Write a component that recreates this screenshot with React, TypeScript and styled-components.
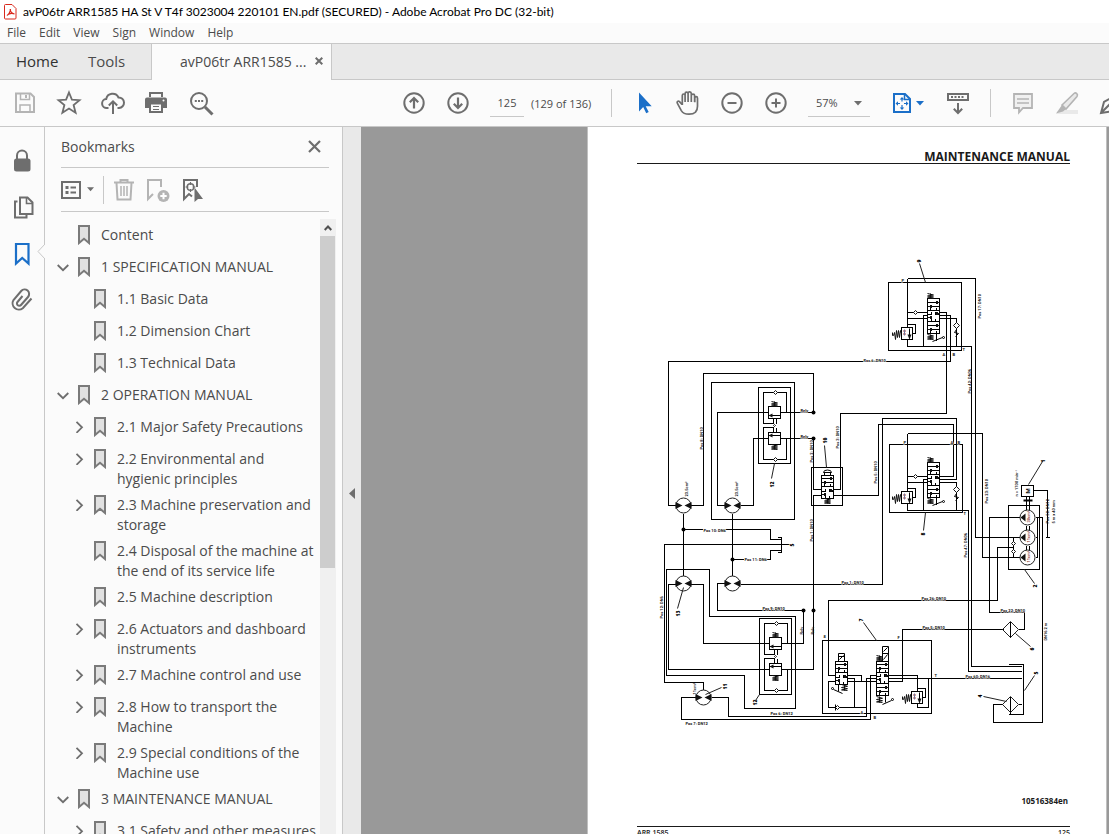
import React from "react";
import styled, { createGlobalStyle } from "styled-components";

const GlobalStyle = createGlobalStyle`
  * { box-sizing: border-box; }
  body { margin: 0; background: #fbfbfb; }
  body, button, input, select { font-family: "Open Sans", "Noto Sans", sans-serif; }
`;

const Window = styled.div`
  height: 100vh;
  display: flex;
  flex-direction: column;
  overflow: hidden;
  color: #4b4b4b;
  background: #fbfbfb;
`;

const PlainButton = styled.button`
  border: 0;
  padding: 0;
  margin: 0;
  background: transparent;
  color: inherit;
  display: flex;
  align-items: center;
  justify-content: center;
`;

/* ---------- window chrome ---------- */

const TitleBar = styled.header`
  flex: 0 0 23px;
  display: flex;
  align-items: center;
  gap: 6px;
  padding-left: 4px;
  background: #fff;
  color: #000;
`;

const Title = styled.h1`
  margin: 0;
  font-size: 12px;
  font-weight: 400;
  line-height: 22px;
  font-family: Lato, "Open Sans", sans-serif;
  white-space: nowrap;
`;

const MenuBar = styled.nav`
  flex: 0 0 20px;
  display: flex;
  gap: 13px;
  padding-left: 7px;
`;

const MenuItem = styled(PlainButton)`
  font-size: 12px;
  line-height: 20px;
`;

const TabBar = styled.nav`
  flex: 0 0 37px;
  display: flex;
  background: #e9e9e9;
  border-top: 1px solid #c8c8c8;
`;

const NavTab = styled(PlainButton)<{ $strong?: boolean }>`
  width: ${(p) => (p.$strong ? 72 : 79)}px;
  padding: 0 0 2px 16px;
  justify-content: flex-start;
  font-size: 15px;
  color: ${(p) => (p.$strong ? "#323232" : "#4b4b4b")};
  border-bottom: 1px solid #c8c8c8;
`;

const DocTab = styled.div`
  width: 181px;
  display: flex;
  align-items: center;
  justify-content: space-between;
  padding: 0 8px 2px 28px;
  background: #fbfbfb;
  border: solid #c8c8c8;
  border-width: 0 1px;
  font-size: 14px;
`;

const TabRest = styled.div`
  flex: 1;
  border-bottom: 1px solid #c8c8c8;
`;

/* ---------- toolbar ---------- */

const Toolbar = styled.div`
  flex: 0 0 47px;
  display: flex;
  align-items: center;
  padding-left: 3px;
  border-bottom: 1px solid #c8c8c8;
  overflow: hidden;
  font-size: 11px;
`;

const ToolGroup = styled.div<{ $gap?: number }>`
  display: flex;
  align-items: center;
  flex: none;
  margin-left: ${(p) => p.$gap ?? 0}px;
`;

const ToolButton = styled(PlainButton)<{ $tone?: string }>`
  width: 44px;
  height: 40px;
  flex: none;
  color: ${(p) => p.$tone ?? "#6e6e6e"};
`;

const FitButton = styled(ToolButton)`
  width: 56px;
  gap: 4px;
`;

const Separator = styled.span`
  width: 1px;
  height: 28px;
  flex: none;
  background: #c8c8c8;
`;

const PageInput = styled.input`
  width: 34px;
  height: 28px;
  margin-left: 10px;
  padding: 0;
  border: 0;
  border-bottom: 1px solid #c8c8c8;
  background: transparent;
  text-align: center;
  font-size: 11px;
  color: #4b4b4b;
`;

const PageCount = styled.span`
  width: 80px;
  margin-left: 7px;
  white-space: nowrap;
`;

const ZoomBox = styled.div`
  position: relative;
  width: 62px;
  height: 28px;
  border-bottom: 1px solid #c8c8c8;
  color: #6e6e6e;
  svg { position: absolute; right: 8px; top: 12px; pointer-events: none; }
`;

const ZoomSelect = styled.select`
  appearance: none;
  width: 100%;
  height: 27px;
  padding: 0 0 0 8px;
  border: 0;
  background: transparent;
  font-size: 11px;
  color: #4b4b4b;
`;

/* ---------- left side ---------- */

const Body = styled.div`
  flex: 1;
  min-height: 0;
  display: flex;
`;

const Rail = styled.nav`
  flex: 0 0 45px;
  border-right: 1px solid #c8c8c8;
  display: flex;
  flex-direction: column;
  padding-top: 11px;
`;

const RailButton = styled(PlainButton)<{ $active?: boolean }>`
  position: relative;
  height: 46px;
  width: 44px;
  color: ${(p) => (p.$active ? "#1b6fc8" : "#6e6e6e")};
`;

const Notch = styled.svg`
  position: absolute;
  right: -1px;
  top: 14px;
`;

const Panel = styled.aside`
  flex: 0 0 298px;
  display: flex;
  flex-direction: column;
  padding: 0 6px 0 16px;
  border-right: 1px solid #c8c8c8;
`;

const PanelHead = styled.div`
  flex: 0 0 41px;
  margin-right: 7px;
  padding: 0 8px 2px 0;
  display: flex;
  align-items: center;
  justify-content: space-between;
  border-bottom: 1px solid #c8c8c8;
`;

const PanelTitle = styled.h2`
  margin: 0;
  font-size: 14px;
  font-weight: 400;
`;

const PanelTools = styled.div`
  flex: 0 0 44px;
  margin-right: 7px;
  display: flex;
  align-items: center;
  border-bottom: 1px solid #c8c8c8;
`;

const OptionsButton = styled(PlainButton)`
  width: 42px;
  gap: 6px;
  justify-content: flex-start;
  color: #6e6e6e;
`;

const PanelButton = styled(PlainButton)<{ $tone: string }>`
  width: 34px;
  height: 28px;
  color: ${(p) => p.$tone};
`;

const PanelButtons = styled.div`
  display: flex;
  padding-left: 3px;
`;

const ListArea = styled.div`
  flex: 1;
  min-height: 0;
  display: flex;
`;

const Tree = styled.ul`
  flex: 1;
  min-width: 0;
  margin: 0 0 0 -8px;
  padding: 7px 0 0;
  list-style: none;
  overflow: hidden;
`;

const Row = styled.li<{ $level: number }>`
  display: grid;
  grid-template-columns: 20px 16px minmax(0, 1fr);
  min-height: 32px;
  padding: 6px 0 0 ${(p) => p.$level * 16}px;
`;

const Toggle = styled(PlainButton)`
  height: 20px;
  color: #6e6e6e;
`;

const BookmarkIcon = styled.svg`
  margin-left: 4px;
`;

const RowLink = styled.a`
  padding-left: 12px;
  font-size: 14px;
  line-height: 20px;
  color: #4b4b4b;
  text-decoration: none;
  white-space: pre-line;
`;

const Scrollbar = styled.div`
  flex: 0 0 16px;
  margin-top: 7px;
  background: #f0f0f0;
`;

const ScrollUp = styled(PlainButton)`
  width: 16px;
  height: 17px;
  color: #505050;
`;

const Thumb = styled.div`
  width: 15px;
  height: 54%;
  background: #cdcdcd;
`;

const Splitter = styled(PlainButton)`
  flex: 0 0 18px;
  padding-top: 26px;
  background: #e9e9e9;
  color: #6e6e6e;
`;

/* ---------- document ---------- */

const Viewer = styled.main`
  flex: 1;
  min-width: 0;
  display: grid;
  grid-template-columns: minmax(0, 226fr) minmax(0, 520fr) 2px;
  background: #999;
  overflow: hidden;
`;

const Page = styled.article`
  grid-column: 2;
  background: #fff;
  border: solid #c0c0c0;
  border-width: 0 1px;
  padding: 0 36px 0 49px;
  color: #1a1a1a;
`;

const PageHeading = styled.h2`
  margin: 0;
  height: 37px;
  padding-top: 22px;
  font-size: 12px;
  line-height: 16px;
  font-weight: 700;
  text-align: right;
  white-space: nowrap;
  border-bottom: 1px solid #1a1a1a;
`;

const Diagram = styled.svg`
  display: block;
  width: 100%;
  height: auto;
  margin-top: 86px;
`;

const DrawingCode = styled.p`
  margin: 64px 2px 0 0;
  font-size: 8px;
  line-height: 14px;
  font-weight: 700;
  text-align: right;
`;

const PageFoot = styled.footer`
  margin-top: 18px;
  border-top: 1px solid #1a1a1a;
  display: flex;
  justify-content: space-between;
  font-size: 7px;
  line-height: 12px;
  font-weight: 600;
`;

const Caret = ({ w = 8 }: { w?: number }) => (
  <svg width={w} height="5" viewBox="0 0 8 5"><path d="M0 0h8L4 4.600z" fill="currentColor" /></svg>
);

const Icon = ({ size = 28, children }: { size?: number; children: React.ReactNode }) => (
  <svg width={size} height={size} viewBox="0 0 28 28" fill="none" stroke="currentColor" strokeWidth="2">
    {children}
  </svg>
);

type Item = { label: string; level: number; state?: "open" | "closed" };
const items: Item[] = [
  { label: "Content", level: 0 },
  { label: "1 SPECIFICATION MANUAL", level: 0, state: "open" },
  { label: "1.1 Basic Data", level: 1 },
  { label: "1.2 Dimension Chart", level: 1 },
  { label: "1.3 Technical Data", level: 1 },
  { label: "2 OPERATION MANUAL", level: 0, state: "open" },
  { label: "2.1 Major Safety Precautions", level: 1, state: "closed" },
  { label: "2.2 Environmental and\nhygienic principles", level: 1, state: "closed" },
  { label: "2.3 Machine preservation and\nstorage", level: 1, state: "closed" },
  { label: "2.4 Disposal of the machine at\nthe end of its service life", level: 1 },
  { label: "2.5 Machine description", level: 1 },
  { label: "2.6 Actuators and dashboard\ninstruments", level: 1, state: "closed" },
  { label: "2.7 Machine control and use", level: 1, state: "closed" },
  { label: "2.8 How to transport the\nMachine", level: 1, state: "closed" },
  { label: "2.9 Special conditions of the\nMachine use", level: 1, state: "closed" },
  { label: "3 MAINTENANCE MANUAL", level: 0, state: "open" },
  { label: "3.1 Safety and other measures", level: 1, state: "closed" },
];

/* ---------- hydraulic scheme symbols ---------- */

const pipes = [
  "M675 505H668V361H950V315H939",
  "M690 505H703V373H813V412H780M768 412H717V505H725",
  "M740 505H753V438H768M780 438H813V489H821",
  "M711 382H794V519H711z",
  "M683 513V576M732 513V576",
  "M683 529H702M722 529H770V539H780M777 537H781V552H777M781 544H788",
  "M732 559H743M764 559H770V550H780",
  "M780 544H664V682H703V690",
  "M666 569H709V616H795V708H744V675H666z",
  "M675 584H668V669H769M690 584H703V643H769",
  "M725 583H717V610H803V643H781M740 584H882V418H956V479H939",
  "M821 495H813V669H781",
  "M695 697H681V719H870V675H876M711 697H728V716H866V678H876",
  "M832 489H840V413H946V312H939M832 495H878V424H953V476H939",
  "M811 467H842V505H811z",
  "M907 278H975V537H1020M907 433H982V557H1020",
  "M961 346H971V666H1021M961 510H968V671H1021",
  "M1033 490H1047V537M1045 537H1049",
  "M1008 505H1039V569H1008z",
  "M1026 496V510M1029 496V510M1026 525V530M1029 525V530M1026 545V550M1029 545V550",
  "M1020 517H989V612H1024V629H1018M1003 629H902V681H888",
  "M1035 557H1037V517M1035 537H1037M1035 517H1042V722H993V704H1002",
  "M1013 537V557M1013 547H997V600H828V675H835",
  "M822 640H931V713H822z",
  "M1008 664H1023V714H1008M1018 704H1021",
  "M888 678H1021M1010 621V637M1010 696V714",
  "M847 675H861V681M847 681H876M847 678H854V707M835 681H828V707H866",
  "M888 675H917V691M917 703V707H928V678M917 688H925V697H922",
];

const Motor = ({ x, y }: { x: number; y: number }) => (
  <g>
    <circle cx={x} cy={y} r="7.500" fill="#fff" stroke="#222" />
    <path d={`M${x - 8} ${y - 3.500}v7l7-3.500zM${x + 8} ${y - 3.500}v7l-7-3.500z`} fill="#111" stroke="none" />
  </g>
);

const Pump = ({ y, cap }: { y: number; cap: string }) => (
  <g>
    <circle cx="1027" cy={y} r="7.500" fill="#fff" stroke="#222" />
    <path d={`M1025 ${y - 4}v8l-5-4z`} fill="#111" stroke="none" />
    <text transform={`translate(1029 ${y + 5}) rotate(-90)`}>{cap}</text>
  </g>
);

const Diamond = ({ x, y, r = 3 }: { x: number; y: number; r?: number }) => (
  <path d={`M${x} ${y - r}l${r} ${r}l${-r} ${r}l${-r} ${-r}z`} fill="#fff" stroke="#111" />
);

const Spring = ({ x, y, h = 5 }: { x: number; y: number; h?: number }) => (
  <path d={`M${x - 3} ${y}l6 ${h * 0.3}l-6 ${h * 0.2}l6 ${h * 0.2}l-6 ${h * 0.2}l6 ${h * 0.1}M${x} ${y}v${h}`} stroke="#111" />
);

/* pair of counterbalance valves in a frame */
const ValvePair = ({ x, y, w, h, top }: { x: number; y: number; w: number; h: number; top: number }) => {
  const sx = x + 10;
  return (
    <g>
      <g shapeRendering="crispEdges">
        <path d={`M${x} ${y}h${w}v${h}h${-w}z`} />
        <path d={`M${sx} ${top + 14}h12v12h-12zM${sx} ${top + 40}h12v12h-12z`} fill="#fff" />
        <path d={`M${sx + 18} ${top + 20}V${top}H${sx - 5}V${top + 31}H${sx + 5}V${top + 26}M${sx + 8} ${top + 26}v5`} />
        <path d={`M${sx + 18} ${top + 46}V${top + 67}H${sx - 5}V${top + 35}H${sx + 5}V${top + 40}M${sx + 8} ${top + 35}v5`} />
        <path d={`M${sx} ${top + 23}h11M${sx} ${top + 43}h11`} />
      </g>
      <path d={`M${sx} ${top + 23}l4-2v4zM${sx} ${top + 43}l4-2v4z`} fill="#111" stroke="none" />
      <Diamond x={sx + 7} y={top} r={2} />
      <Diamond x={sx + 7} y={top + 67} r={2} />
      <Diamond x={sx + 6} y={top + 33} r={1} />
      <Spring x={sx + 6} y={top + 9} />
      <Spring x={sx + 6} y={top + 52} />
    </g>
  );
};

const Relief = ({ x, y }: { x: number; y: number }) => (
  <g>
    <path d={`M${x} ${y}h11v12h-11z`} fill="#fff" shapeRendering="crispEdges" />
    <path d={`M${x + 8} ${y + 1}v10`} />
    <path d={`M${x + 6} ${y + 7}h4l-2 5z`} fill="#111" stroke="none" />
    <path d={`M${x} ${y + 6}l-1-3l-1 7l-1-7l-1 7l-1-7l-1 9l-1-7l-1 3h-1v-3`} stroke="#111" />
    <path d={`M${x + 2} ${y + 3}l2 4M${x + 4} ${y + 3}l-2 4`} stroke="#a44" />
    <path d={`M${x + 3} ${y + 2}v6`} stroke="#779" />
  </g>
);

const Spool = ({ x, y, rows }: { x: number; y: number; rows: number[] }) => (
  <g>
    <path
      d={`M${x} ${y}h12v${rows[rows.length - 1]}h-12z` + rows.slice(0, -1).map((r) => `M${x} ${y + r}h12`).join("")}
      fill="#fff"
      shapeRendering="crispEdges"
    />
    {rows.map((r, i) => (
      <g key={r} shapeRendering="crispEdges">
        <path d={i === 1 ? `M${x} ${y + r - 7}h4v-3M${x + 12} ${y + r - 7}h-4v-3M${x + 4} ${y + r - 3}v3M${x + 8} ${y + r - 3}v3` : `M${x} ${y + r - 8}h12M${x + 3} ${y + r - 3}v3M${x + 9} ${y + r - 3}v3M${x} ${y + r - 4}h12`} />
        <path d={`M${x + 12} ${y + r - 8}l-4-2v4zM${x} ${y + r - 4}l4-2v4z`} fill="#111" stroke="none" />
      </g>
    ))}
  </g>
);

/* steering block: frame, spool, relief and check valves */
const Block = ({ dy, fx }: { dy: number; fx: number }) => (
  <g transform={`translate(0 ${dy})`}>
    <g shapeRendering="crispEdges">
      <path d={`M${fx} ${282 - (dy ? 2 : 0)}h73V${dy ? 348 : 350}h-73z`} />
      <path d={`M907 ${dy ? 269 : 278}V327M907 339V346H961M907 312H927M907 318H927M939 318H956V346M927 315H923V346M907 324H915V333H912M936 333V340`} />
    </g>
    <Spool x={927} y={298} rows={[12, 23, 35]} />
    <Spring x={930} y={293} />
    <Spring x={930} y={334} />
    <Relief x={901} y={327} />
    <Diamond x={915} y={312} r={2} />
    <Diamond x={956} y={325} />
    <path d="M956 329l-2 3l4 1l-3 3M932 341L942 337" />
    <circle cx="943" cy="337" r="1" />
  </g>
);

const hLabels: [number, number, string][] = [
  [863, 361, "Pos 6: DN10"], [800, 411, "Relv"], [800, 437, "Relv"],
  [703, 531, "Pos 10: DN6"], [744, 560, "Pos 11: DN6"], [762, 609, "Pos 9: DN10"],
  [770, 714, "Pos 6: DN12"], [685, 724, "Pos 7: DN12"], [841, 583, "Pos 1: DN10"],
  [921, 599, "Pos 26: DN10"], [922, 628, "Pos 5: DN10"], [1000, 611, "Pos 22: DN10"],
  [965, 677, "Pos 60: DN16"], [823, 637, "8"], [897, 638, "F"], [934, 676, "T"],
  [860, 713, "A"], [873, 718, "B"], [901, 281, "P"], [942, 355, "A"], [952, 355, "B"],
  [903, 443, "P"], [950, 443, "A"], [957, 443, "B"], [962, 350, "T"], [963, 514, "T"],
];

const vLabels: [number, number, string][] = [
  [702, 449, "Pos 8: DN10"], [687, 496, "23.5cm³"], [737, 496, "23.5cm³"],
  [812, 462, "Pos 2: DN10"], [812, 541, "Pos 1: DN10"], [838, 448, "Pos 3: DN10"],
  [662, 618, "Pos 12: DN6"], [802, 634, "Relv"], [813, 634, "Relv"], [695, 694, "11cm³"],
  [980, 318, "Pos 17: DN10"], [970, 393, "Pos 42: DN06"], [876, 483, "Pos 5: DN10"],
  [987, 503, "Pos 23: DN10"], [966, 557, "Pos 47: DN06"], [1017, 496, "n = 1700 min⁻¹"],
  [1048, 523, "Pos 50: DN12"], [1054, 523, "5 m x 40 mm"], [1046, 640, "DN16 2 m"],
];

const leaders: [number, number, number, number, string, number, number][] = [
  [774, 463, 771, 478, "12", 773, 487], [759, 694, 755, 700, "12", 756, 705],
  [683, 587, 677, 608, "13", 679, 616], [705, 694, 721, 687, "11", 726, 689],
  [826, 467, 824, 445, "10", 826, 443], [919, 263, 925, 282, "9", 920, 262],
  [925, 512, 923, 530, "8", 924, 535], [1028, 484, 1042, 461, "1", 1044, 462],
  [1024, 569, 1034, 583, "2", 1036, 587], [1015, 633, 1030, 646, "6", 1033, 650],
  [863, 622, 876, 640, "7", 862, 621], [983, 696, 1006, 701, "4", 981, 697],
  [1024, 690, 1034, 675, "5", 1037, 674], [788, 544, 789, 544, "5", 793, 546],
];

const HydraulicScheme = () => (
  <Diagram viewBox="637 250 433 480" role="img" aria-label="Hydraulic scheme">
    <g transform="translate(.5 .5)" fill="none" stroke="#000" strokeWidth="1">
      <g shapeRendering="crispEdges">{pipes.map((d) => <path key={d} d={d} />)}</g>
      <ValvePair x={758} y={387} w={32} h={76} top={392} />
      <ValvePair x={759} y={618} w={32} h={76} top={623} />
      <Motor x={683} y={505} />
      <Motor x={732} y={505} />
      <Motor x={683} y={583} />
      <Motor x={732} y={583} />
      <Motor x={703} y={697} />
      <Block dy={0} fx={888} />
      <Block dy={164} fx={889} />
      <Spool x={821} y={475} rows={[11, 23]} />
      <path d="M824 475v-3h6v3M823 472a4 2.500 0 0 1 8 0z" />
      <Spring x={827} y={498} />
      <Spool x={835} y={661} rows={[11, 23]} />
      <Spool x={876} y={661} rows={[11, 22, 34]} />
      <path d="M838 653h6v8h-6zM882 646h6v15h-6zM882 653h6M838 656h6M839 659l4-4M883 651l4-4M883 659l4-5" />
      <Spring x={844} y={684} h={6} />
      <Spring x={879} y={655} />
      <Spring x={879} y={696} h={6} />
      <Relief x={911} y={691} />
      <Diamond x={837} y={707} r={2} />
      <path d="M835 704v6M838 684v7M833 689l9 4M885 695v7M882 704l9-4" />
      <circle cx="832" cy="688" r="1" />
      <circle cx="892" cy="699" r="1" />
      <path d="M1021 485h12v11h-12z" fill="#fff" shapeRendering="crispEdges" />
      <path d="M1023 500h9" strokeWidth="2" />
      <path d="M1010 621l8 8l-8 8l-8-8zM1010 696l8 8l-8 8l-8-8z" stroke="#222" />
      <Diamond x={1013} y={543} r={2} />
      <Diamond x={1013} y={551} r={2} />
      {[[813, 412], [813, 438], [683, 529], [732, 559], [803, 610], [813, 610]].map(([x, y]) => (
        <circle key={`${x}-${y}`} cx={x} cy={y} r="2" fill="#000" stroke="none" />
      ))}
      <g fill="#111" stroke="none" fontFamily="Roboto, sans-serif" fontSize="4" fontWeight="700">
        <g fill="#8a3a30"><Pump y={517} cap="30cm³" /><Pump y={537} cap="11cm³" /><Pump y={557} cap="11cm³" /></g>
        {hLabels.map(([x, y, t]) => (
          <text key={`${x}-${y}`} x={x} y={y} stroke="#fff" strokeWidth="1" paintOrder="stroke">{t}</text>
        ))}
        {vLabels.map(([x, y, t]) => (
          <text key={`${x}-${y}`} transform={`translate(${x} ${y}) rotate(-90)`}>{t}</text>
        ))}
        <text transform="translate(1029 493) rotate(-90)" fontSize="6">M</text>
      </g>
      {leaders.map(([x1, y1, x2, y2, t, tx, ty]) => (
        <g key={`${t}-${x1}`}>
          <path d={`M${x1} ${y1}L${x2} ${y2}`} stroke="#222" />
          <text transform={`translate(${tx} ${ty}) rotate(-90)`} fill="#000" stroke="none" fontFamily="Open Sans, sans-serif" fontWeight="800" fontSize="5">{t}</text>
        </g>
      ))}
    </g>
  </Diagram>
);

export default function App() {
  return (
    <Window>
      <GlobalStyle />
      <TitleBar>
        <svg width="13" height="16" viewBox="0 0 13 16" fill="#fff" stroke="#d9281c">
          <path d="M1.500.5H8l4 4v9.500a1 1 0 0 1-1 1H1.500a1 1 0 0 1-1-1V1.500a1 1 0 0 1 1-1z" />
          <path d="M3 11.500c1.500-.5 3.500-4 3.500-6.500M6.200 5c0 2.500 2 4.500 4.300 5M3 11.500c1.500-2 5-2.500 7.500-1.500" strokeWidth="1.200" fill="none" />
        </svg>
        <Title>avP06tr ARR1585 HA St V T4f 3023004 220101 EN.pdf (SECURED) - Adobe Acrobat Pro DC (32-bit)</Title>
      </TitleBar>
      <MenuBar aria-label="Menu">
        {["File", "Edit", "View", "Sign", "Window", "Help"].map((m) => <MenuItem key={m}>{m}</MenuItem>)}
      </MenuBar>
      <TabBar aria-label="Tabs">
        <NavTab $strong>Home</NavTab>
        <NavTab>Tools</NavTab>
        <DocTab>
          <span>avP06tr ARR1585 ...</span>
          <PlainButton aria-label="Close tab">
            <svg width="8" height="8" viewBox="0 0 8 8" stroke="#6e6e6e" strokeWidth="2"><path d="M.7.7l6.600 6.600M7.300.7L.7 7.300" /></svg>
          </PlainButton>
        </DocTab>
        <TabRest />
      </TabBar>
      <Toolbar role="toolbar" aria-label="Main">
        <ToolGroup>
          <ToolButton aria-label="Save" $tone="#b4b4b4">
            <Icon><path d="M5 4.500h14.500l3.500 3.500v15H5z" /><path d="M9.500 4v6.500h9V4M9 23v-7h10v7" strokeWidth="1.500" /><path d="M15 6v3" /></Icon>
          </ToolButton>
          <ToolButton aria-label="Star">
            <Icon><path d="M14 3.500l2.900 7.200 7.600.5-5.900 4.900 2 7.600L14 19.500l-6.600 4.200 2-7.600-5.900-4.900 7.600-.5z" strokeWidth="1.800" /></Icon>
          </ToolButton>
          <ToolButton aria-label="Upload">
            <Icon><path d="M9.500 19H8a4.500 4.500 0 0 1-.8-9A6.500 6.500 0 0 1 19.500 8.500a5.200 5.200 0 0 1 .5 10.500h-1.500M14 25V12.500M9.800 16.500l4.200-4.200 4.200 4.200" /></Icon>
          </ToolButton>
          <ToolButton aria-label="Print">
            <Icon>
              <path d="M6 3h14v5H6z" fill="currentColor" stroke="none" /><path d="M8 5h10v3H8z" fill="#fbfbfb" stroke="none" />
              <path d="M4 8.500h18a2 2 0 0 1 2 2V19H2v-8.500a2 2 0 0 1 2-2z" fill="currentColor" stroke="none" />
              <path d="M7 14.500h12V23H7z" fill="#fbfbfb" /><path d="M10 17.500h6M10 20.500h6" strokeWidth="1.200" />
              <circle cx="20.500" cy="11.500" r="1" fill="#fff" stroke="none" />
            </Icon>
          </ToolButton>
          <ToolButton aria-label="Find">
            <Icon><circle cx="12" cy="12" r="8" /><path d="M18 18l7.500 7.500" strokeWidth="3" /><path d="M7.800 12h2M11 12h2M14.200 12h2" /></Icon>
          </ToolButton>
        </ToolGroup>
        <ToolGroup $gap={169}>
          <ToolButton aria-label="Previous page">
            <Icon><circle cx="14" cy="14" r="9.700" /><path d="M14 19.500V9.500M9.800 13.300L14 9l4.200 4.300" strokeWidth="2.200" /></Icon>
          </ToolButton>
          <ToolButton aria-label="Next page">
            <Icon><circle cx="14" cy="14" r="9.700" /><path d="M14 8.500v10M9.800 14.700L14 19l4.200-4.300" strokeWidth="2.200" /></Icon>
          </ToolButton>
          <PageInput aria-label="Page number" defaultValue="125" />
          <PageCount>(129 of 136)</PageCount>
        </ToolGroup>
        <Separator />
        <ToolGroup $gap={10}>
          <ToolButton aria-label="Select" $tone="#1b6fc8">
            <Icon><path d="M9 3.500V22.500l4.200-4.500 3 6.300 2.500-1.300-3-5.800h6z" fill="currentColor" stroke="none" /></Icon>
          </ToolButton>
          <ToolButton aria-label="Pan">
            <Icon>
              <path d="M8 15.500L5.500 12.700c-1.300-1.300-3 0-2.200 1.400l4 7.500C9 24.500 11 25.200 15 25.200c6 0 8.500-3 8.500-8v-8c0-2-2.700-2-2.700 0v4M8.300 16V6.500c0-2 2.800-2 2.800 0V13M11.100 13V4.700c0-2 3-2 3 0V13M14.100 13V4.200c0-2 3.200-1.500 3.200.5V13M17.300 13V6.500c0-1.800 3.300-1.800 3.300 0V13" strokeWidth="1.700" />
            </Icon>
          </ToolButton>
          <ToolButton aria-label="Zoom out"><Icon><circle cx="14" cy="14" r="9.700" /><path d="M9.500 14h9" /></Icon></ToolButton>
          <ToolButton aria-label="Zoom in"><Icon><circle cx="14" cy="14" r="9.700" /><path d="M9.500 14h9M14 9.500v9" /></Icon></ToolButton>
        </ToolGroup>
        <ToolGroup $gap={10}>
          <ZoomBox>
            <ZoomSelect aria-label="Zoom level" defaultValue="57%"><option>57%</option></ZoomSelect>
            <Caret />
          </ZoomBox>
        </ToolGroup>
        <ToolGroup $gap={10}>
          <FitButton aria-label="Fit page" $tone="#1b6fc8">
            <svg width="20" height="22" viewBox="0 0 20 22" fill="none" stroke="currentColor" strokeWidth="2">
              <path d="M2 2h11l5 5v13H2z" /><path d="M12.500 2v5.500H18" strokeWidth="1.500" />
              <path d="M10 6.500v3M10 13v3M5 11.500h3M12 11.500h3" strokeWidth="1.200" />
              <path d="M10 5l2.300 2.500H7.700zM10 18l2.300-2.500H7.700zM3.500 11.500L6 9.200v4.600zM16.500 11.500L14 9.200v4.600z" fill="currentColor" stroke="none" />
            </svg>
            <Caret />
          </FitButton>
          <ToolButton aria-label="Scroll mode">
            <Icon><path d="M4 5h20v6H4z" fill="#fbfbfb" /><path d="M7 8h2M10.500 8h2M14 8h2M17.500 8h2M14 14v10M9.800 19.700L14 24l4.200-4.300" /></Icon>
          </ToolButton>
        </ToolGroup>
        <ToolGroup $gap={10}>
          <Separator />
          <ToolGroup $gap={10}>
            <ToolButton aria-label="Comment" $tone="#b4b4b4">
              <Icon><path d="M5 5h18v14h-9l-4 4.500V19H5z" fill="#f0f0f0" strokeWidth="1.800" /><path d="M8 10h12M8 14h12" strokeWidth="1.300" /></Icon>
            </ToolButton>
            <ToolButton aria-label="Highlight" $tone="#b4b4b4">
              <Icon><path d="M10 21h15v4H3z" fill="#e9e9e9" stroke="none" /><path d="M9 16L21 4.500c1.800-1.500 4.500.8 3 3L13 20z" fill="#e9e9e9" strokeWidth="1.600" /><path d="M9 16l4 4-3 2.500-7 2z" fill="currentColor" stroke="none" /></Icon>
            </ToolButton>
            <ToolButton aria-label="Sign">
              <Icon><path d="M4 24l3-11 9-5 6 6-5 8zM5 23l8-8M13.500 14.500h1" /></Icon>
            </ToolButton>
          </ToolGroup>
        </ToolGroup>
      </Toolbar>
      <Body>
        <Rail aria-label="Navigation panes">
          <RailButton aria-label="Security">
            <Icon><path d="M9 12V8.500a5 5 0 0 1 10 0V12" /><rect x="6" y="11.500" width="16.500" height="13" rx="2.500" fill="currentColor" stroke="none" /></Icon>
          </RailButton>
          <RailButton aria-label="Thumbnails">
            <Icon><path d="M9.500 8.500H7v16h11.500V21" /><path d="M12 4.500h7.500l5 5V21H12z" /><path d="M18.500 4.500v6h6" strokeWidth="1.600" /></Icon>
          </RailButton>
          <RailButton aria-label="Bookmarks" $active>
            <Icon><path d="M8 5h12.500v19.500L14.200 19 8 24.500z" strokeWidth="2.200" /></Icon>
            <Notch width="8" height="15" viewBox="0 0 8 15"><path d="M8 0L1 7.500 8 15" fill="#fbfbfb" stroke="#c8c8c8" /></Notch>
          </RailButton>
          <RailButton aria-label="Attachments">
            <Icon><path d="M13.500 10l-5 6a2.300 2.300 0 0 0 3.500 3l7-8a4.500 4.500 0 0 0-6.800-6L4.500 14a6.300 6.300 0 0 0 9.300 8.200l8.700-9.700" transform="translate(1 1)" /></Icon>
          </RailButton>
        </Rail>
        <Panel>
          <PanelHead>
            <PanelTitle>Bookmarks</PanelTitle>
            <PlainButton aria-label="Close panel">
              <svg width="13" height="13" viewBox="0 0 13 13" stroke="#6e6e6e" strokeWidth="2.200"><path d="M1 1l11 11M12 1L1 12" /></svg>
            </PlainButton>
          </PanelHead>
          <PanelTools>
            <OptionsButton aria-label="Options">
              <svg width="20" height="18" viewBox="0 0 20 18" fill="none" stroke="currentColor" strokeWidth="2">
                <path d="M1 1h18v16H1z" /><path d="M9.500 6.500H15M9.500 11.500H15" /><path d="M4.500 6.500h3M4.500 11.500h3" strokeWidth="3" />
              </svg>
              <Caret w={7} />
            </OptionsButton>
            <Separator />
            <PanelButtons>
              <PanelButton aria-label="Delete" $tone="#b4b4b4">
                <Icon><path d="M4 6.500h20M10.500 6V4h7v2M6.500 7l1 16.500h13L21.500 7" /><path d="M11 10v10M14 10v10M17 10v10" strokeWidth="1.500" /></Icon>
              </PanelButton>
              <PanelButton aria-label="New bookmark" $tone="#b4b4b4">
                <Icon><path d="M17 11V4H4v19l5-5" /><circle cx="19.500" cy="20" r="6" fill="currentColor" stroke="none" /><path d="M19.500 16.800v6.400M16.300 20h6.400" stroke="#fff" /></Icon>
              </PanelButton>
              <PanelButton aria-label="Find current bookmark" $tone="#6e6e6e">
                <Icon><path d="M19 11V4H6v19l5-5 3 2.500" /><circle cx="12.500" cy="11" r="3.300" strokeWidth="1.500" /><path d="M12.500 6v3M12.500 13v3M7.500 11h3M14.500 11h3" strokeWidth="1.200" /><path d="M16.500 11.500V26l3.500-3h5z" fill="currentColor" stroke="none" /></Icon>
              </PanelButton>
            </PanelButtons>
          </PanelTools>
          <ListArea>
            <Tree>
              {items.map((it) => (
                <Row key={it.label} $level={it.level}>
                  {it.state ? (
                    <Toggle aria-label={it.state === "open" ? "Collapse" : "Expand"}>
                      <svg width="12" height="12" viewBox="0 0 12 12" fill="none" stroke="currentColor" strokeWidth="1.800">
                        <path d={it.state === "open" ? "M.7 4L6 9.200 11.300 4" : "M3.500.8L9 6.300 3.500 11.800"} />
                      </svg>
                    </Toggle>
                  ) : <span />}
                  <BookmarkIcon width="14" height="20" viewBox="0 0 14 20">
                    <path d="M2 1h10v17L7 13.700 2 18z" fill="#e1e1e1" stroke="#7a7a7a" strokeWidth="2" />
                  </BookmarkIcon>
                  <RowLink href="#">{it.label}</RowLink>
                </Row>
              ))}
            </Tree>
            <Scrollbar>
              <ScrollUp aria-label="Scroll up">
                <svg width="8" height="6" viewBox="0 0 8 6" fill="none" stroke="currentColor" strokeWidth="2"><path d="M.7 5L4 1.500 7.300 5" /></svg>
              </ScrollUp>
              <Thumb />
            </Scrollbar>
          </ListArea>
        </Panel>
        <Splitter aria-label="Hide panel">
          <svg width="6" height="11" viewBox="0 0 6 11"><path d="M6 0v11L0 5.500z" fill="currentColor" /></svg>
        </Splitter>
        <Viewer>
          <Page>
            <PageHeading>MAINTENANCE MANUAL</PageHeading>
            <HydraulicScheme />
            <DrawingCode>10516384en</DrawingCode>
            <PageFoot><span>ARR 1585</span><span>125</span></PageFoot>
          </Page>
        </Viewer>
      </Body>
    </Window>
  );
}
